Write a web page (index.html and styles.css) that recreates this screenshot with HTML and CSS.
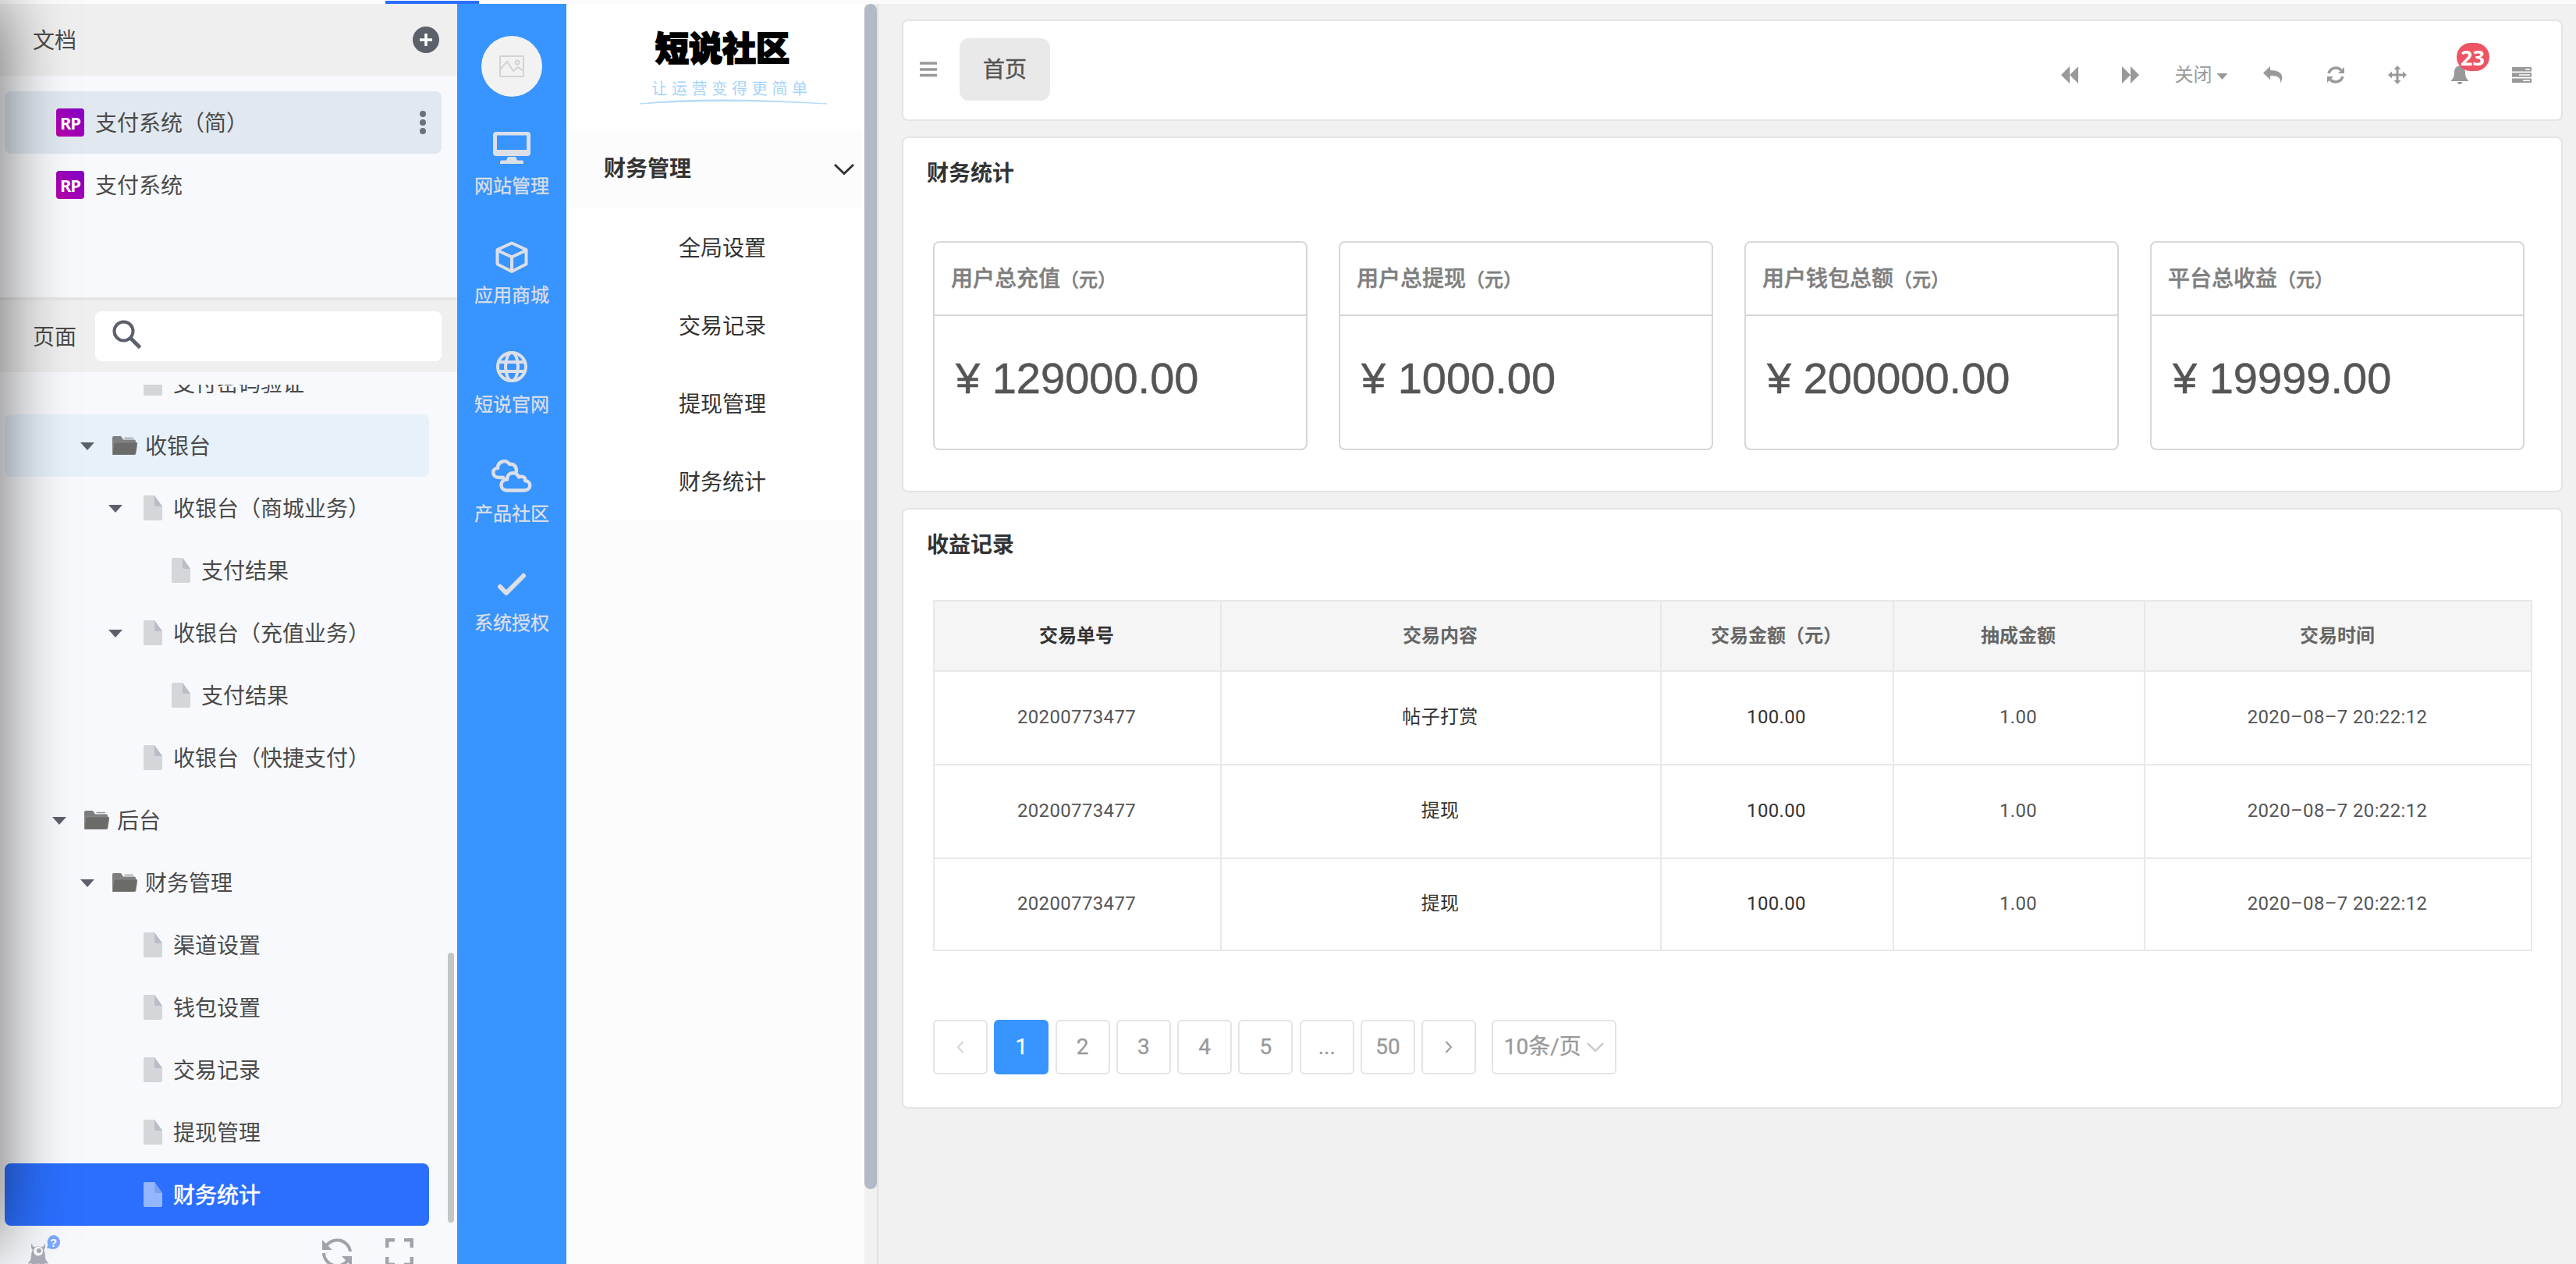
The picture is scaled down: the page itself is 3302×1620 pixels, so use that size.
FILE: index.html
```html
<!DOCTYPE html>
<html lang="zh-CN">
<head>
    <meta charset="UTF-8">
    <meta name="viewport" content="width=device-width, initial-scale=1.0">
    <title>财务统计</title>
    <link rel="stylesheet" href="styles.css">
</head>
<body>
    <!-- shared icons -->
    <svg class="sprite" width="0" height="0">
        <symbol id="page" viewBox="0 0 24 32">
            <path d="M2 0h12l10 14v16a2 2 0 0 1-2 2H2a2 2 0 0 1-2-2V2a2 2 0 0 1 2-2z" fill="currentColor"/>
            <path class="fold" d="M14 0l10 14h-8a2 2 0 0 1-2-2z"/>
        </symbol>
        <symbol id="folder" viewBox="0 0 32 24">
            <path d="M0 2a2 2 0 0 1 2-2h9l3 4.500h14a2 2 0 0 1 2 2V20H0z" fill="#7d7e7e"/>
            <path d="M15 1.800h12v1.500H16z" fill="#999"/>
            <path d="M4 8h26.500a1.500 1.500 0 0 1 1.500 1.800L30 22.500a2 2 0 0 1-2 1.500H1.500A1.500 1.500 0 0 1 0 22.500L2 9.500A2 2 0 0 1 4 8z" fill="#6b6b6a" stroke="#999" stroke-width=".5"/>
        </symbol>
        <symbol id="caret" viewBox="0 0 18 10">
            <path d="M0 0h18l-9 10z" fill="#5b606b"/>
        </symbol>
    </svg>

    <div class="topstrip"><div class="active-tab"></div></div>
    <div class="app">
        <aside class="sidebar">
            <div class="side-head">
                <span>文档</span>
                <svg width="34" height="34" viewBox="0 0 34 34"><circle cx="17" cy="17" r="17" fill="#5b606b"/><path d="M17 9v16M9 17h16" stroke="#fff" stroke-width="3.500"/></svg>
            </div>
            <div class="docs">
                <div class="doc selected">
                    <span class="rp">RP</span>
                    <span class="doc-name">支付系统（简）</span>
                    <svg class="dots" width="8" height="32" viewBox="0 0 8 32"><circle cx="4" cy="5" r="4"/><circle cx="4" cy="16" r="4"/><circle cx="4" cy="27" r="4"/></svg>
                </div>
                <div class="doc">
                    <span class="rp">RP</span>
                    <span class="doc-name">支付系统</span>
                </div>
            </div>
            <div class="page-head">
                <span>页面</span>
                <div class="search">
                    <svg width="38" height="38" viewBox="0 0 38 38" fill="none" stroke="#5b606b"><circle cx="14.500" cy="14.500" r="12" stroke-width="4"/><path d="M23 23l12.500 12.500" stroke-width="5"/></svg>
                </div>
            </div>
            <div class="tree">
                <div class="node lv3 first"><svg class="page"><use href="#page"/></svg><span>支付密码验证</span></div>
                <div class="node lv2 hover"><svg class="caret"><use href="#caret"/></svg><svg class="folder"><use href="#folder"/></svg><span>收银台</span></div>
                <div class="node lv3"><svg class="caret"><use href="#caret"/></svg><svg class="page"><use href="#page"/></svg><span>收银台（商城业务）</span></div>
                <div class="node lv4"><svg class="page"><use href="#page"/></svg><span>支付结果</span></div>
                <div class="node lv3"><svg class="caret"><use href="#caret"/></svg><svg class="page"><use href="#page"/></svg><span>收银台（充值业务）</span></div>
                <div class="node lv4"><svg class="page"><use href="#page"/></svg><span>支付结果</span></div>
                <div class="node lv3"><svg class="page"><use href="#page"/></svg><span>收银台（快捷支付）</span></div>
                <div class="node lv1"><svg class="caret"><use href="#caret"/></svg><svg class="folder"><use href="#folder"/></svg><span>后台</span></div>
                <div class="node lv2"><svg class="caret"><use href="#caret"/></svg><svg class="folder"><use href="#folder"/></svg><span>财务管理</span></div>
                <div class="node lv3"><svg class="page"><use href="#page"/></svg><span>渠道设置</span></div>
                <div class="node lv3"><svg class="page"><use href="#page"/></svg><span>钱包设置</span></div>
                <div class="node lv3"><svg class="page"><use href="#page"/></svg><span>交易记录</span></div>
                <div class="node lv3"><svg class="page"><use href="#page"/></svg><span>提现管理</span></div>
                <div class="node lv3 current"><svg class="page"><use href="#page"/></svg><span>财务统计</span></div>
                <div class="tree-thumb"></div>
            </div>
            <div class="side-foot">
                <svg class="monster" width="44" height="46" viewBox="0 0 44 46">
                    <path d="M5 11c0 3 1 5 4 5q4-1.500 8 0c3 0 4-2 4-5 2 4 1 7-1 9 3 5 1 9 3 13 1 2 3 3 3 5-3-1-5-1-6.500 1-1 1-3 1-4-.5-1.500-1.500-3.500-1.500-5 0-1 1.500-3 1.500-4 .5-1.500-2-3.500-2-6.500-1 0-2 2-3 3-5 2-4 0-8 3-13-2-2-3-5-1-9z" fill="#abaeb8"/>
                    <circle cx="13" cy="21.500" r="6" fill="#fff"/><circle cx="14" cy="21" r="3" fill="#abaeb8"/>
                    <path d="M32 1a9 9 0 1 1-3 17.500l-5-1 1.500-4A9 9 0 0 1 32 1z" fill="#7ba9ff"/>
                </svg>
                <span class="help">?</span>
                <svg class="sync" width="38" height="38" viewBox="0 0 38 38"><path d="M36 17A17 17 0 0 0 5 10M2 19a17 17 0 0 0 31 9" fill="none" stroke="#a0a3ac" stroke-width="4"/><path d="M0 2v13h13zM38 36V23H25z" fill="#a0a3ac"/></svg>
                <svg class="full" width="36" height="36" viewBox="0 0 36 36" fill="none" stroke="#a0a3ac" stroke-width="4.500"><path d="M2.200 12V2.200H12M24 2.200h9.800V12M2.200 24v9.800H12M24 33.800h9.800V24"/></svg>
            </div>
        </aside>

        <nav class="rail">
            <div class="avatar">
                <svg width="32" height="28" viewBox="0 0 32 28" fill="none" stroke="#d3d3d3" stroke-width="2"><rect x="1" y="1" width="30" height="26" rx="1"/><path d="M1 18l9-10 8 12 6-5 7 5"/><circle cx="23" cy="9" r="2.500"/></svg>
            </div>
            <a class="rail-item">
                <svg width="48" height="42" viewBox="0 0 48 42"><path fill-rule="evenodd" d="M4 0h40a4 4 0 0 1 4 4v23a4 4 0 0 1-4 4H4a4 4 0 0 1-4-4V4a4 4 0 0 1 4-4zm1 4.500V23h38V4.500zM19 32h10l2 4.500h6a2 2 0 0 1 2 2V41H9v-2.500a2 2 0 0 1 2-2h6z"/></svg>
                <span>网站管理</span>
            </a>
            <a class="rail-item">
                <svg width="48" height="42" viewBox="0 0 48 42" class="line"><path d="M24 2.500l18.500 8.500v18.500L24 39 5.500 29.500V11zM6 12l18 8.500L42 12M24 20v18" stroke-width="4"/></svg>
                <span>应用商城</span>
            </a>
            <a class="rail-item">
                <svg width="48" height="42" viewBox="0 0 48 42" class="line" stroke-width="4"><circle cx="24" cy="21" r="18"/><ellipse cx="24" cy="21" rx="8" ry="18"/><path d="M7 15h34M7 27h34"/></svg>
                <span>短说官网</span>
            </a>
            <a class="rail-item">
                <svg width="52" height="42" viewBox="0 0 52 42" class="line" stroke-width="4.500"><path d="M15 23H9.500C0 23 0 11 8 11 8 2 19-1 23 6c6-1 9 3 9 9"/><path d="M20 39.500c-10 0-10-14 0-14 0-10 12-11 15-3 4-2 9 0 8 4.500 9 1 8 12.500-1 12.500z"/></svg>
                <span>产品社区</span>
            </a>
            <a class="rail-item">
                <svg width="48" height="42" viewBox="0 0 48 42" class="line"><path d="M9 23l8 8 22-22" stroke-width="6"/></svg>
                <span>系统授权</span>
            </a>
        </nav>

        <div class="menu">
            <div class="logo">
                <div class="logo-name">短说社区</div>
                <div class="logo-slogan">让运营变得更简单</div>
                <svg width="240" height="9" viewBox="0 0 240 9"><path d="M0 8Q90 -2 240 8Q100 1 0 8z" fill="#a5d3fa" stroke="#b4dbfb"/></svg>
            </div>
            <div class="menu-title">
                <span>财务管理</span>
                <svg width="26" height="16" viewBox="0 0 26 16" fill="none" stroke="#333" stroke-width="3"><path d="M1 2l12 11.500L25 2"/></svg>
            </div>
            <ul>
                <li>全局设置</li>
                <li>交易记录</li>
                <li>提现管理</li>
                <li>财务统计</li>
            </ul>
        </div>
        <div class="scrollbar"><div class="thumb"></div></div>

        <main>
            <header class="card topbar">
                <svg class="burger" width="22" height="20" viewBox="0 0 22 20" stroke="#999" stroke-width="3.500"><path d="M0 2h22M0 10h22M0 17.500h22"/></svg>
                <div class="tab">首页</div>
                <div class="tools">
                    <svg width="22" height="22" viewBox="0 0 22 22"><path d="M11 0v22L0 11zM22 0v22L11 11z"/></svg>
                    <svg width="22" height="22" viewBox="0 0 22 22"><path d="M0 0v22l11-11zM11 0v22l11-11z"/></svg>
                    <div class="close">关闭<svg width="15" height="8" viewBox="0 0 14 8"><path d="M0 0h14L7 8z"/></svg></div>
                    <svg width="25" height="22" viewBox="0 0 25 22"><path d="M9 0v5c13 0 19 6 13 17 1-7-2-10-13-10v5L0 8.500z"/></svg>
                    <svg width="22" height="22" viewBox="0 0 22 22"><path d="M2 9a9.500 9.500 0 0 1 16-4M20 13a9.500 9.500 0 0 1-16 4" fill="none" stroke="#999" stroke-width="3.500"/><path d="M22 1v8h-8zM0 21v-8h8z"/></svg>
                    <svg width="24" height="24" viewBox="0 0 24 24"><path d="M12 0l4.500 5H13.500v5.500H19V7.500l5 4.500-5 4.500v-3h-5.500V19h3L12 24l-4.500-5h3v-5.500H5v3L0 12l5-4.500v3h5.500V5h-3z"/></svg>
                    <div class="bell">
                        <svg width="22" height="24" viewBox="0 0 22 24"><path d="M11 0c5 1 7 4 7 9 0 6 2 8 4 10v1H0v-1c2-2 4-4 4-10 0-5 2-8 7-9zM8 21h6a3 3 0 0 1-6 0z"/></svg>
                        <span class="badge">23</span>
                    </div>
                    <svg width="25" height="20" viewBox="0 0 25 20"><path fill-rule="evenodd" d="M0 0h25v5.500H0zm17 2v1.500h6V2zM0 7.200h25v5.500H0zM9 9.200v1.500h14V9.200zM0 14.500h25V20H0zm14 2V18h9v-1.500z"/></svg>
                </div>
            </header>

            <section class="card stats">
                <h2>财务统计</h2>
                <div class="stat-list">
                    <div class="stat">
                        <h3>用户总充值<small>（元）</small></h3>
                        <p>¥ 129000.00</p>
                    </div>
                    <div class="stat">
                        <h3>用户总提现<small>（元）</small></h3>
                        <p>¥ 1000.00</p>
                    </div>
                    <div class="stat">
                        <h3>用户钱包总额<small>（元）</small></h3>
                        <p>¥ 200000.00</p>
                    </div>
                    <div class="stat">
                        <h3>平台总收益<small>（元）</small></h3>
                        <p>¥ 19999.00</p>
                    </div>
                </div>
            </section>

            <section class="card records">
                <h2>收益记录</h2>
                <table>
                    <colgroup>
                        <col class="c-no"><col class="c-content"><col class="c-money"><col class="c-cut"><col class="c-time">
                    </colgroup>
                    <thead>
                        <tr>
                            <th>交易单号</th>
                            <th>交易内容</th>
                            <th>交易金额（元）</th>
                            <th>抽成金额</th>
                            <th>交易时间</th>
                        </tr>
                    </thead>
                    <tbody>
                        <tr>
                            <td>20200773477</td>
                            <td class="dark">帖子打赏</td>
                            <td class="dark">100.00</td>
                            <td>1.00</td>
                            <td>2020–08–7 20:22:12</td>
                        </tr>
                        <tr>
                            <td>20200773477</td>
                            <td class="dark">提现</td>
                            <td class="dark">100.00</td>
                            <td>1.00</td>
                            <td>2020–08–7 20:22:12</td>
                        </tr>
                        <tr>
                            <td>20200773477</td>
                            <td class="dark">提现</td>
                            <td class="dark">100.00</td>
                            <td>1.00</td>
                            <td>2020–08–7 20:22:12</td>
                        </tr>
                    </tbody>
                </table>
                <div class="pager">
                    <a><svg width="10" height="16" viewBox="0 0 10 16" fill="none" stroke="#d4d4d4" stroke-width="2"><path d="M8.500 1l-6.500 7 6.500 7"/></svg></a>
                    <a class="on">1</a>
                    <a>2</a>
                    <a>3</a>
                    <a>4</a>
                    <a>5</a>
                    <a>...</a>
                    <a>50</a>
                    <a><svg width="10" height="16" viewBox="0 0 10 16" fill="none" stroke="#999" stroke-width="2"><path d="M1.500 1L8 8l-6.500 7"/></svg></a>
                    <div class="size">10条/页<svg width="22" height="14" viewBox="0 0 22 14" fill="none" stroke="#ccc" stroke-width="2.500"><path d="M1 2l10 10L21 2"/></svg></div>
                </div>
            </section>
        </main>
    </div>
    <div class="edge-shadow"></div>
</body>
</html>
```
FILE: styles.css
```css
* {
  box-sizing: border-box;
}

body {
  margin: 0;
  height: 1620px;
  overflow: hidden;
  position: relative;
  display: flex;
  flex-direction: column;
  background-color: #f1f1f1;
  font-family: "Liberation Sans", "Noto Sans CJK SC", sans-serif;
  font-size: 28px;
  line-height: 40px;
  color: #333;
}

svg {
  display: block;
  flex: none;
}

.sprite {
  position: absolute;
}

.topstrip {
  height: 5px;
  flex: none;
  background-color: #fbfbfb;
  padding: 1px 0 0 494px;
}

.active-tab {
  width: 120px;
  height: 4px;
  background-color: #2a6fff;
}

.app {
  flex: 1;
  min-height: 0;
  display: flex;
}

/* left sidebar */
.sidebar {
  width: 586px;
  flex: none;
  display: flex;
  flex-direction: column;
  background-color: #f8f9fc;
  color: #4a4a4a;
}

.side-head, .page-head {
  height: 92px;
  flex: none;
  display: flex;
  align-items: center;
  justify-content: space-between;
  padding: 0 23px 0 42px;
  background-color: #efefef;
}

.side-head span, .page-head span, .doc-name, .node span {
  padding-top: 3px;
}

.docs {
  height: 284px;
  flex: none;
  padding: 20px 20px 0 6px;
}

.doc {
  height: 80px;
  display: flex;
  align-items: center;
  padding: 0 20px 0 66px;
  border-radius: 8px;
}

.doc.selected {
  background-color: #e1e8f0;
}

.rp {
  width: 36px;
  height: 36px;
  margin-right: 14px;
  border-radius: 4px;
  background: linear-gradient(45deg, #b800a8, #8200c8);
  color: #fff;
  font: bold 22px/36px "Noto Sans", sans-serif;
  letter-spacing: -1px;
  text-align: center;
}

.dots {
  margin-left: auto;
  fill: #6b727e;
}

.page-head {
  height: 96px;
  border-top: 4px solid #e6e6e6;
  padding-right: 20px;
}

.search {
  width: 444px;
  height: 64px;
  padding: 11px 22px;
  border-radius: 8px;
  background-color: #fff;
}

.tree {
  position: relative;
  flex: none;
  height: 1078px;
  margin-top: 16px;
  overflow: hidden;
}

.node {
  height: 80px;
  margin-left: 6px;
  width: 544px;
  display: flex;
  align-items: center;
  border-radius: 8px;
}

.node.first {
  margin-top: -42px;
}

.lv1 {
  padding-left: 102px;
}

.lv2 {
  padding-left: 138px;
}

.lv3 {
  padding-left: 174px;
}

.lv4 {
  padding-left: 210px;
}

.caret {
  width: 18px;
  height: 10px;
  margin: 2px 23px 0 -41px;
}

.folder {
  width: 32px;
  height: 24px;
  margin-right: 10px;
}

.page {
  width: 24px;
  height: 32px;
  margin: 0 14px 0 4px;
  color: #d5d6da;
  fill: #babdc7;
}

.hover {
  background-color: #e6f1fa;
}

.current {
  background-color: #2b6fff;
  color: #fff;
  -webkit-text-stroke: 0.600px #fff;
}

.current .page {
  color: #94b6ff;
  fill: #7ba1ee;
}

.tree-thumb {
  position: absolute;
  right: 4px;
  top: 728px;
  width: 8px;
  height: 346px;
  border-radius: 4px;
  background-color: #c4c5c6;
}

.side-foot {
  position: relative;
  flex: 1;
  min-height: 0;
  overflow: hidden;
  display: flex;
  padding: 16px 56px 0 36px;
}

.monster {
  margin-top: -5px;
  overflow: visible;
}

.help {
  position: absolute;
  left: 64px;
  top: 13px;
  color: #fff;
  font: bold 15px/18px "Liberation Sans", sans-serif;
}

.sync {
  margin-left: auto;
}

.full {
  margin-left: 43px;
}

.edge-shadow {
  position: absolute;
  left: -100px;
  top: 0;
  width: 100px;
  height: 1590px;
  box-shadow: 0 0 90px rgba(0, 0, 0, 0.6);
  pointer-events: none;
}

/* blue rail */
.rail {
  width: 140px;
  flex: none;
  display: flex;
  flex-direction: column;
  align-items: center;
  padding-top: 41px;
  background-color: #3894ff;
}

.avatar {
  width: 78px;
  height: 78px;
  flex: none;
  margin-bottom: 45px;
  border-radius: 50%;
  background-color: #f2f2f2;
  display: flex;
  align-items: center;
  justify-content: center;
}

.rail-item {
  height: 140px;
  display: flex;
  flex-direction: column;
  align-items: center;
  color: #dcdfe6;
  fill: #dcdfe6;
  font-size: 24px;
  -webkit-text-stroke: 0.300px #dcdfe6;
}

.rail-item span {
  margin-top: 8px;
}

.line {
  fill: none;
  stroke: #dcdfe6;
  stroke-linejoin: round;
  stroke-linecap: round;
}

/* second level menu */
.menu {
  width: 382px;
  flex: none;
  background-color: #fcfcfc;
}

.logo {
  height: 160px;
  padding-top: 27px;
  display: flex;
  flex-direction: column;
  align-items: center;
  background-color: #fff;
}

.logo-name {
  font-size: 43px;
  line-height: 62px;
  font-weight: 900;
  color: #000;
  -webkit-text-stroke: 2px #000;
  margin-left: 18px;
}

.logo-slogan {
  margin: 8px 0 0 42px;
  font-size: 20px;
  line-height: 24px;
  letter-spacing: 5.700px;
  color: #a5d3fa;
}

.logo svg {
  margin: -1px 0 0 46px;
}

.menu-title {
  height: 102px;
  padding: 2px 13px 0 48px;
  display: flex;
  align-items: center;
  justify-content: space-between;
  font-weight: bold;
}

.menu ul {
  margin: 0;
  padding: 0;
  list-style: none;
  background-color: #fff;
}

.menu li {
  height: 100px;
  padding-left: 144px;
  line-height: 103px;
}

.scrollbar {
  width: 18px;
  flex: none;
  border-right: 2px solid #e0e0e0;
}

.thumb {
  height: 1519px;
  border-radius: 8px;
  background-color: #b2bac5;
}

/* content */
main {
  flex: 1;
  padding: 20px 17px 0 30px;
  display: flex;
  flex-direction: column;
  gap: 20px;
}

.card {
  border: 2px solid #e4e4e4;
  border-radius: 8px;
  background-color: #fff;
}

.topbar {
  height: 130px;
  display: flex;
  align-items: center;
  padding: 0 38px 0 21px;
}

.burger {
  margin-top: -3px;
}

.tab {
  width: 116px;
  height: 80px;
  margin: -2px 0 0 29px;
  border-radius: 12px;
  background-color: #e9e9e9;
  color: #555;
  line-height: 82px;
  text-align: center;
  -webkit-text-stroke: 0.500px #555;
}

.tools {
  margin-left: auto;
  display: flex;
  align-items: center;
  gap: 56.500px;
  padding-top: 12px;
  fill: #999;
  color: #999;
}

.close {
  display: flex;
  align-items: center;
  gap: 5px;
  margin: 0 -11px;
  font-size: 24px;
}

.close svg {
  margin-top: 4px;
}

.bell {
  position: relative;
}

.badge {
  position: absolute;
  left: 7px;
  top: -29px;
  width: 42px;
  height: 36px;
  border-radius: 18px;
  background-color: #ed5565;
  color: #fff;
  font: bold 27px/38px "Open Sans", sans-serif;
  text-align: center;
}

h2 {
  margin: 0;
  font-size: 28px;
  line-height: 40px;
}

.stats {
  height: 456px;
  padding: 26px 47px 0 30px;
}

.stat-list {
  display: grid;
  grid-template-columns: repeat(4, 480px);
  gap: 40px;
  margin: 66px 0 0 8px;
}

.stat {
  height: 268px;
  border: 2px solid #d7d7d7;
  border-radius: 8px;
}

.stat h3 {
  height: 94px;
  margin: 0;
  padding-left: 21px;
  border-bottom: 2px solid #d7d7d7;
  font-size: 28px;
  font-weight: 500;
  line-height: 93px;
  color: #7f7f7f;
  -webkit-text-stroke: 0.500px #7f7f7f;
}

.stat small {
  font-size: 24px;
}

.stat p {
  margin: 48px 0 0 27px;
  font-size: 56px;
  line-height: 64px;
  color: #555;
  -webkit-text-stroke: 0.500px #555;
}

.records {
  height: 770px;
  padding: 26px 37px 0 30px;
}

table {
  width: 2050px;
  margin: 50px 0 0 8px;
  table-layout: fixed;
  border-collapse: collapse;
  font-size: 24px;
}

.c-no {
  width: 368px;
}

.c-content {
  width: 564px;
}

.c-money {
  width: 298px;
}

.c-cut {
  width: 322px;
}

th, td {
  height: 120px;
  padding: 0 2px 2px 0;
  border: 2px solid #e8e8e8;
  text-align: center;
}

th {
  height: 90px;
  padding: 0 2px 0 0;
  background-color: #f5f5f5;
  color: #666;
}

th:first-child {
  color: #333;
}

td {
  color: #555;
  font-family: Roboto, "Noto Sans CJK SC", sans-serif;
  letter-spacing: 0.350px;
}

tr:last-child td {
  height: 118px;
}

.dark {
  color: #333;
}

.pager {
  display: flex;
  gap: 8.300px;
  margin: 88px 0 0 8px;
  font-family: Roboto, "Noto Sans CJK SC", sans-serif;
  color: #999;
  -webkit-text-stroke: 0.300px;
}

.pager a {
  width: 70px;
  height: 70px;
  border: 2px solid #e4e4e4;
  border-radius: 6px;
  display: flex;
  align-items: center;
  justify-content: center;
}

.pager .on {
  border: none;
  background-color: #3894ff;
  color: #fff;
}

.size {
  width: 160px;
  height: 70px;
  margin-left: 11px;
  padding: 0 14px;
  border: 2px solid #e4e4e4;
  border-radius: 6px;
  display: flex;
  align-items: center;
  justify-content: space-between;
}
```
